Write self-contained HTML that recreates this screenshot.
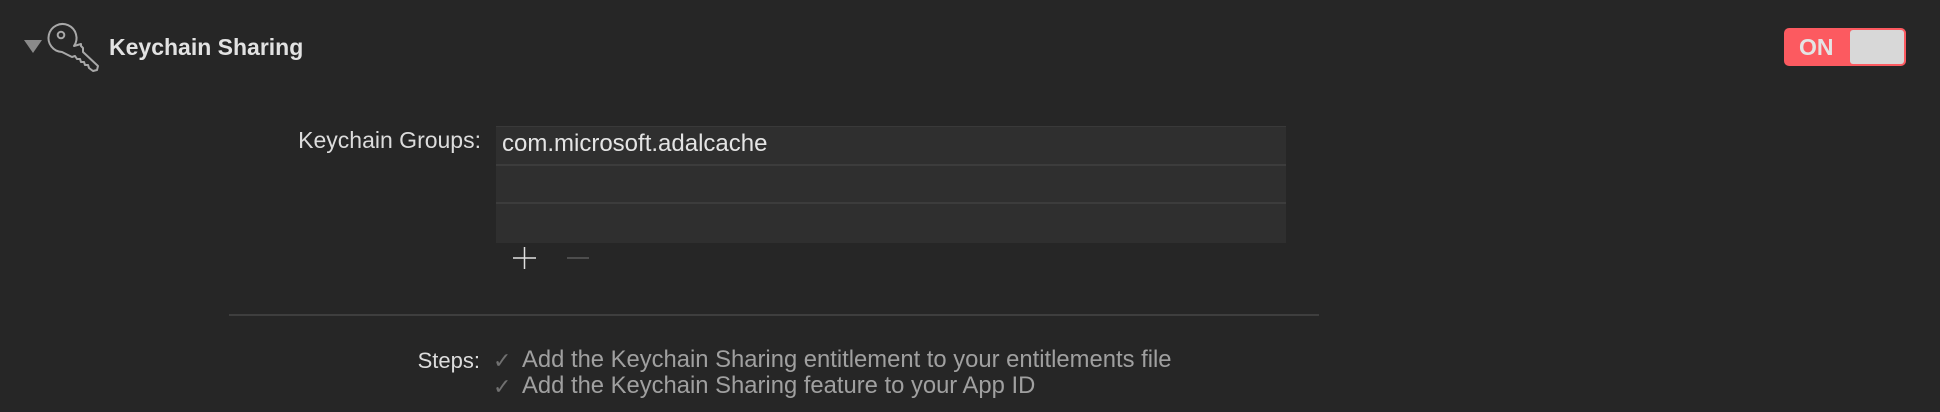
<!DOCTYPE html>
<html><head><style>
html,body{margin:0;padding:0;background:#262626;width:1940px;height:412px;overflow:hidden;font-family:"Liberation Sans",sans-serif;}
.a{position:absolute;white-space:nowrap;}
</style></head><body>
<svg class="a" style="left:0;top:0" width="1940" height="412">
<polygon points="24,40 42,40 33,53" fill="#8a8a8a"/>
<g fill="none" stroke="#a8a8a8" stroke-width="2" stroke-linejoin="round">
<path d="M74,46 A14,14 0 1 0 62,52 L72,57 L75,56 L77,59 L80,59 L81,62 L84,62 L85,65 L88,65 L89,68 L93,71 L97,70 L98,66 L83,52 L83,48 L81,46 L81,44 Z"/>
<circle cx="61" cy="35" r="3.3"/>
</g>
<line x1="229" y1="315" x2="1319" y2="315" stroke="#3e3e3e" stroke-width="2"/>
<rect x="496" y="126" width="790" height="117" fill="#2f2f2f"/>
<rect x="496" y="126" width="790" height="1" fill="#393939"/>
<rect x="496" y="164" width="790" height="2" fill="#3c3c3c"/>
<rect x="496" y="202" width="790" height="2" fill="#3c3c3c"/>
<line x1="513" y1="258" x2="536" y2="258" stroke="#e0e0e0" stroke-width="1.5"/>
<line x1="524.5" y1="247" x2="524.5" y2="269" stroke="#e0e0e0" stroke-width="1.5"/>
<line x1="567" y1="258" x2="589" y2="258" stroke="#5a5a5a" stroke-width="1.5"/>
<rect x="1784" y="28" width="122" height="38" rx="5" fill="#fc5a60"/>
<rect x="1850" y="30" width="54" height="34" rx="3" fill="#d8d8d8"/>
</svg>
<div class="a" style="left:109px;top:34px;font-size:23px;font-weight:bold;color:#e2e2e2">Keychain Sharing</div>
<div class="a" style="left:1799px;top:34px;font-size:23px;font-weight:bold;color:#e4e4e4">ON</div>
<div class="a" style="right:1459px;top:127px;font-size:23px;color:#dcdcdc">Keychain Groups:</div>
<div class="a" style="left:502px;top:130px;font-size:24px;color:#e4e4e4">com.microsoft.adalcache</div>
<div class="a" style="right:1460px;top:348px;font-size:22px;color:#dcdcdc">Steps:</div>
<div class="a" style="left:493px;top:348px;font-size:22px;color:#707070">✓</div>
<div class="a" style="left:522px;top:346px;font-size:23.8px;color:#a0a0a0">Add the Keychain Sharing entitlement to your entitlements file</div>
<div class="a" style="left:493px;top:374px;font-size:22px;color:#707070">✓</div>
<div class="a" style="left:522px;top:372px;font-size:23.8px;color:#a0a0a0">Add the Keychain Sharing feature to your App ID</div>
</body></html>
